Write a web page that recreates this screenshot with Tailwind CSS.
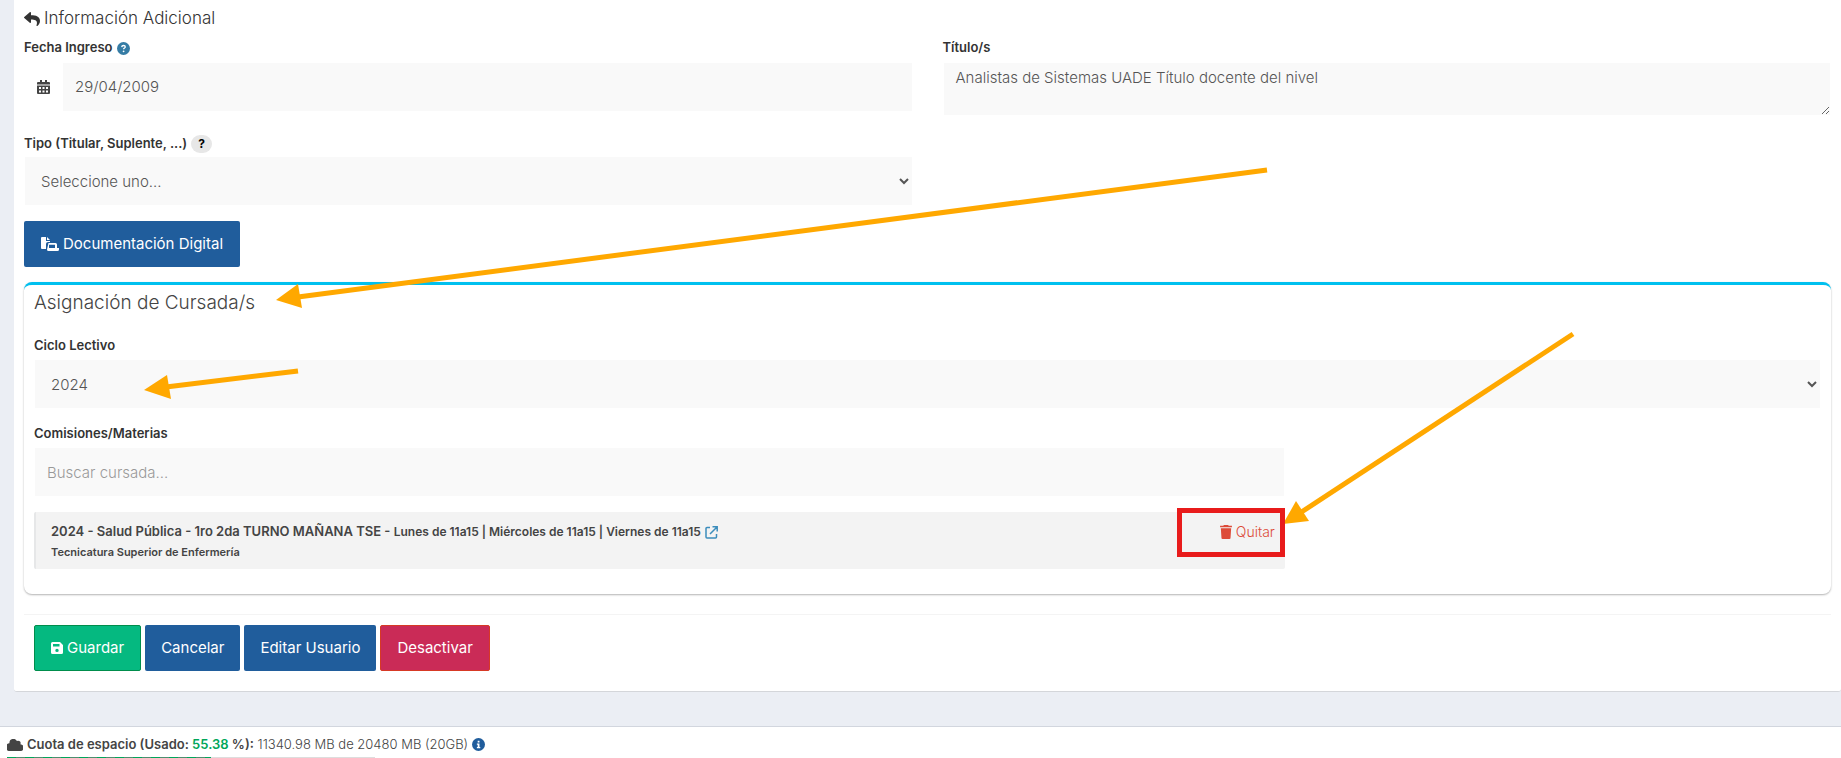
<!DOCTYPE html>
<html lang="es">
<head>
  <meta charset="UTF-8" />
  <meta name="viewport" content="width=device-width,initial-scale=1" />
  <title>Información Adicional</title>
  <script src="https://cdn.jsdelivr.net/npm/@tailwindcss/browser@4"></script>
</head>
<body class="relative h-screen overflow-hidden bg-[#ebeef4] font-['Inter','Liberation_Sans',sans-serif] font-light text-[#333]">

  <main class="ml-[14px] rounded-b-[3px] bg-white border-b border-[#d4d6da] px-[10px] pb-5">
    <form>
      <h4 class="flex items-center gap-1 h-[38px] text-[17px]">
        <svg class="size-4" viewBox="0 0 512 512" fill="currentColor"><path d="M8.3 189.800L184.300 37.900C199.700 24.500 224 35.300 224 56v80c160.600 1.800 288 34 288 186.300 0 61.400-39.600 122.300-83.300 154.100-13.700 9.900-33.100-2.500-28.100-18.600 45.300-145-21.500-183.500-176.600-185.800V360c0 20.700-24.300 31.500-39.700 18.200l-176-152c-11-9.600-11-26.800 0-36.400z"/></svg>
        Información Adicional
      </h4>

      <div class="grid grid-cols-2 gap-x-[30px]">
        <div>
          <div class="flex items-center gap-1 h-6 pb-1 text-[13px] font-semibold">
            <label for="fecha">Fecha Ingreso</label>
            <svg class="size-[13px]" viewBox="0 0 16 16"><circle cx="8" cy="8" r="8" fill="#357ca5"/><path d="M5.800 6.300c.1-1.400 1-2 2.200-2s2.200.7 2.200 1.800c0 1.400-2.100 1.400-2.100 2.900" fill="none" stroke="#fff" stroke-width="1.600"/><circle cx="8.100" cy="11.500" r="1.100" fill="#fff"/></svg>
          </div>
          <div class="flex h-[50px]">
            <span class="flex w-[38px] items-center justify-center text-[#444]">
              <svg class="h-[14px] w-[13px]" viewBox="0 0 13 14" fill="currentColor"><path d="M3 0h2v2h3V0h2v2h2a1 1 0 0 1 1 1v1.500H0V3a1 1 0 0 1 1-1h2zM0 5.500h13V13a1 1 0 0 1-1 1H1a1 1 0 0 1-1-1z"/><path d="M2 7h2v2H2zm3.500 0h2v2h-2zM9 7h2v2H9zm-7 3.500h2v2H2zm3.500 0h2v2h-2zm3.500 0h2v2H9z" fill="#fff"/></svg>
            </span>
            <input id="fecha" type="text" value="29/04/2009" class="flex-1 border border-white bg-[#f9f9f9] px-3 text-[15px] text-[#555]" />
          </div>
        </div>
        <div>
          <label for="titulos" class="flex items-center h-6 pb-1 text-[13px] font-semibold">Título/s</label>
          <textarea id="titulos" class="block h-[54px] w-full resize border border-white bg-[#f9f9f9] px-3 py-1 text-[15px] text-[#555]">Analistas de Sistemas UADE Título docente del nivel</textarea>
        </div>

        <div class="pt-4">
          <div class="flex items-center gap-1 h-6 pb-px text-[13px] font-semibold">
            <label for="tipo">Tipo (Titular, Suplente, ...)</label>
            <button type="button" class="h-[18px] w-[21px] rounded-full bg-[#e7e7e7] text-xs font-bold text-black">?</button>
          </div>
          <select id="tipo" class="block h-[50px] w-full border border-white bg-[#f9f9f9] px-3 text-[15px] text-[#555]">
            <option>Seleccione uno...</option>
          </select>
        </div>
      </div>

      <button type="button" class="mt-[15px] flex h-[46px] items-center gap-1 rounded-xs bg-[#205d9c] px-[17px] text-[15px] font-normal text-white">
        <svg class="h-[15px] w-[18px]" viewBox="0 0 18 15" fill="currentColor"><path d="M0 1a1 1 0 0 1 1-1h4v4h4v1H7a2 2 0 0 0-2 2v5H1a1 1 0 0 1-1-1zM6 0l3 3H6z"/><path fill-rule="evenodd" d="M7.500 6h7a1.500 1.500 0 0 1 1.500 1.500V11h2v1.500a1.500 1.500 0 0 1-1.500 1.500h-9A1.500 1.500 0 0 1 6 12.500zm.5 1.700V11h6V7.700z"/></svg>
        Documentación Digital
      </button>

      <section class="mt-[15px] rounded-[8px] border-t-[3px] border-[#00c0ef] bg-white px-[10px] pb-[25px] shadow-[0_1px_2px_rgba(0,0,0,0.3)]">
        <h3 class="flex items-center h-9 text-[19px] text-[#444]">Asignación de Cursada/s</h3>

        <label for="ciclo" class="mt-3 flex items-center h-[26px] text-[13px] font-semibold">Ciclo Lectivo</label>
        <select id="ciclo" class="block h-[50px] w-full border border-white bg-[#f9f9f9] px-3 text-[15px] text-[#555]">
          <option>2024</option>
        </select>

        <label for="cursada" class="mt-3 flex items-center h-[26px] text-[13px] font-semibold">Comisiones/Materias</label>
        <div class="w-[70%]">
          <input id="cursada" type="text" placeholder="Buscar cursada..." class="block h-[50px] w-full border border-white bg-[#f9f9f9] px-3 text-[15px] placeholder:text-[#999]" />

          <div class="mt-[15px] flex h-[57px] items-start justify-between rounded-xs border-l-2 border-[#e6e7e8] bg-[#f3f3f3] py-[10px] pr-[10px] pl-[15px] text-[#444]">
            <div class="font-semibold">
              <p class="flex items-center gap-1 h-5 text-[13px]">
                <span>2024 - Salud Pública - 1ro 2da TURNO MAÑANA TSE - <span class="text-xs">Lunes de 11a15 | Miércoles de 11a15 | Viernes de 11a15</span></span>
                <a href="#" aria-label="Abrir cursada"><svg class="size-[13px]" viewBox="0 0 13 13" fill="none" stroke="#3c8dbc" stroke-width="1.500"><path d="M5 1.500H2a1 1 0 0 0-1 1V11a1 1 0 0 0 1 1h8.500a1 1 0 0 0 1-1V8M7.500.800h4.700v4.700M12 1 5 8"/></svg></a>
              </p>
              <p class="text-[11px] leading-5">Tecnicatura Superior de Enfermería</p>
            </div>
            <a href="#" class="flex h-5 items-center gap-1 text-sm text-[#dd4b39]">
              <svg class="h-[14px] w-3" viewBox="0 0 11 13" fill="currentColor"><path d="M3.500 0h4l.5.700h3V2H0V.700h3zM.700 3h9.600l-.6 9a1 1 0 0 1-1 1H2.300a1 1 0 0 1-1-1z"/></svg>
              Quitar
            </a>
          </div>
        </div>
      </section>

      <hr class="mt-5 border-[#f4f4f4]" />

      <div class="mt-[10px] flex gap-1 pl-[10px] text-[15px] font-normal text-white">
        <button type="submit" class="flex h-[46px] items-center gap-1 rounded-xs border border-[#008d4c] bg-[#05b980] px-4">
          <svg class="size-3" viewBox="0 0 12 12" fill="currentColor"><path fill-rule="evenodd" d="M1.500 0H9l3 3v7.500a1.500 1.500 0 0 1-1.500 1.500h-9A1.500 1.500 0 0 1 0 10.500v-9A1.500 1.500 0 0 1 1.500 0zM2 2v2.500h6.500V2zm4 4.700a1.700 1.700 0 1 0 0 3.400 1.700 1.700 0 0 0 0-3.400z"/></svg>
          Guardar
        </button>
        <button type="button" class="h-[46px] rounded-xs bg-[#205d9c] px-4">Cancelar</button>
        <button type="button" class="h-[46px] rounded-xs bg-[#205d9c] px-4">Editar Usuario</button>
        <button type="button" class="h-[46px] rounded-xs border border-[#d73925] bg-[#ca2b57] px-4">Desactivar</button>
      </div>
    </form>
  </main>

  <footer class="mt-[34px] border-t border-[#d2d6de] bg-white px-[7px]">
    <div class="flex items-center gap-1 h-[30px] pt-[5px] text-[13px] text-[#444]">
      <svg class="h-3 w-4" viewBox="0 0 16 12" fill="currentColor"><path d="M13.400 5.200A2.500 2.500 0 0 0 9.900 2 4 4 0 0 0 2.400 4v.2A3.900 3.900 0 0 0 3.600 12h9.200a3.400 3.400 0 0 0 .6-6.800z"/></svg>
      <span><b class="font-semibold">Cuota de espacio (Usado: <span class="text-[#00a65a]">55.38</span> %):</b> 11340.98 MB de 20480 MB (20GB)</span>
      <svg class="size-[13px]" viewBox="0 0 16 16"><circle cx="8" cy="8" r="8" fill="#205d9c"/><path d="M7 3.500h2.200v2H7zM6 6.700h3.200V11h1v1.500H6V11h1V8.200H6z" fill="#fff"/></svg>
    </div>
    <div class="h-5 w-[368px] bg-[#ddd]">
      <div class="h-full bg-[repeating-linear-gradient(90deg,#00a65a_0_9px,#4d8f70_9px_18px)]" style="width: 55.38%"></div>
    </div>
  </footer>

  <!-- guide arrows and highlight -->
  <svg class="pointer-events-none absolute top-0 left-0 h-[758px] w-[1841px]" viewBox="0 0 1841 758" fill="#ffa800" stroke="#ffa800">
    <g stroke-width="5">
      <path d="M1267 170 298 297"/>
      <path d="M298 371 166 387"/>
      <path d="M1573 334 1300 513"/>
    </g>
    <g stroke="none">
      <path d="m276 300 22-16 4 24z"/>
      <path d="m144 390 23-15 4 24z"/>
      <path d="m1283 524 13-23 13 20z"/>
    </g>
    <rect x="1179.500" y="510.500" width="103" height="44" fill="none" stroke="#e81b1b" stroke-width="5"/>
  </svg>
</body>
</html>
